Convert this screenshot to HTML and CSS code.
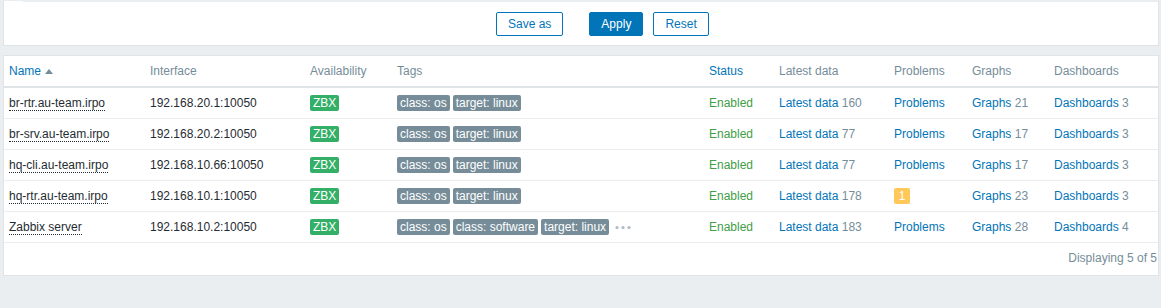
FILE: index.html
```html
<!DOCTYPE html>
<html lang="en">
<head>
<meta charset="utf-8">
<title>Hosts</title>
<link rel="stylesheet" href="styles.css">
</head>
<body>
<div class="page">
  <div class="filter">
    <div class="filter-rule"></div>
    <div class="filter-actions">
      <button class="btn btn-alt btn-save">Save as</button>
      <button class="btn btn-main">Apply</button>
      <button class="btn btn-alt">Reset</button>
    </div>
  </div>
  <div class="list">
    <table class="hosts">
      <colgroup>
        <col class="c-name"><col class="c-iface"><col class="c-avail"><col class="c-tags"><col class="c-status"><col class="c-latest"><col class="c-problems"><col class="c-graphs"><col class="c-dash">
      </colgroup>
      <thead>
        <tr>
          <th><a class="sort">Name</a><span class="arrow-up"></span></th>
          <th>Interface</th>
          <th>Availability</th>
          <th>Tags</th>
          <th><a class="sort">Status</a></th>
          <th>Latest data</th>
          <th>Problems</th>
          <th>Graphs</th>
          <th>Dashboards</th>
        </tr>
      </thead>
      <tbody>
        <tr>
          <td><a class="action">br-rtr.au-team.irpo</a></td>
          <td>192.168.20.1:10050</td>
          <td><span class="avail">ZBX</span></td>
          <td><span class="tag">class: os</span><span class="tag">target: linux</span></td>
          <td class="enabled">Enabled</td>
          <td><a class="link">Latest data</a> <span class="count">160</span></td>
          <td><a class="link">Problems</a></td>
          <td><a class="link">Graphs</a> <span class="count">21</span></td>
          <td><a class="link">Dashboards</a> <span class="count">3</span></td>
        </tr>
        <tr>
          <td><a class="action">br-srv.au-team.irpo</a></td>
          <td>192.168.20.2:10050</td>
          <td><span class="avail">ZBX</span></td>
          <td><span class="tag">class: os</span><span class="tag">target: linux</span></td>
          <td class="enabled">Enabled</td>
          <td><a class="link">Latest data</a> <span class="count">77</span></td>
          <td><a class="link">Problems</a></td>
          <td><a class="link">Graphs</a> <span class="count">17</span></td>
          <td><a class="link">Dashboards</a> <span class="count">3</span></td>
        </tr>
        <tr>
          <td><a class="action">hq-cli.au-team.irpo</a></td>
          <td>192.168.10.66:10050</td>
          <td><span class="avail">ZBX</span></td>
          <td><span class="tag">class: os</span><span class="tag">target: linux</span></td>
          <td class="enabled">Enabled</td>
          <td><a class="link">Latest data</a> <span class="count">77</span></td>
          <td><a class="link">Problems</a></td>
          <td><a class="link">Graphs</a> <span class="count">17</span></td>
          <td><a class="link">Dashboards</a> <span class="count">3</span></td>
        </tr>
        <tr>
          <td><a class="action">hq-rtr.au-team.irpo</a></td>
          <td>192.168.10.1:10050</td>
          <td><span class="avail">ZBX</span></td>
          <td><span class="tag">class: os</span><span class="tag">target: linux</span></td>
          <td class="enabled">Enabled</td>
          <td><a class="link">Latest data</a> <span class="count">178</span></td>
          <td><span class="problem-badge">1</span></td>
          <td><a class="link">Graphs</a> <span class="count">23</span></td>
          <td><a class="link">Dashboards</a> <span class="count">3</span></td>
        </tr>
        <tr>
          <td><a class="action">Zabbix server</a></td>
          <td>192.168.10.2:10050</td>
          <td><span class="avail">ZBX</span></td>
          <td><span class="tag">class: os</span><span class="tag">class: software</span><span class="tag">target: linux</span><svg class="more" width="16" height="5" viewBox="0 0 16 5"><circle cx="2" cy="2.5" r="1.6"/><circle cx="8" cy="2.5" r="1.6"/><circle cx="14" cy="2.5" r="1.6"/></svg></td>
          <td class="enabled">Enabled</td>
          <td><a class="link">Latest data</a> <span class="count">183</span></td>
          <td><a class="link">Problems</a></td>
          <td><a class="link">Graphs</a> <span class="count">28</span></td>
          <td><a class="link">Dashboards</a> <span class="count">4</span></td>
        </tr>
      </tbody>
    </table>
    <div class="list-footer">Displaying 5 of 5</div>
  </div>
</div>
</body>
</html>
```
FILE: styles.css
```css
html, body {
  margin: 0;
  padding: 0;
  background: #ebeef0;
  font-family: "Liberation Sans", Arial, sans-serif;
  font-size: 12px;
  color: #1f2c33;
}

.page {
  padding: 0 2px 0 3px;
}

.filter {
  background: #ffffff;
  border: 1px solid #dfe4e7;
  border-top: none;
}

.filter-rule {
  margin: 1px 0 0 19px;
  border-top: 1px solid #ebeef0;
}

.filter-actions {
  display: flex;
  align-items: center;
  padding: 10px 0 9px 492px;
}

.btn {
  box-sizing: border-box;
  height: 24px;
  padding: 0 11px;
  border: 1px solid #0275b8;
  border-radius: 2px;
  font-family: "Liberation Sans", Arial, sans-serif;
  font-size: 12px;
  line-height: 22px;
  cursor: pointer;
}

.btn-alt {
  background: #ffffff;
  color: #0275b8;
}

.btn-main {
  background: #0275b8;
  color: #ffffff;
  margin-right: 10px;
}

.btn-save {
  margin-right: 26px;
}

.list {
  margin-top: 9px;
  background: #ffffff;
  border: 1px solid #dfe4e7;
}

.hosts {
  width: 100%;
  table-layout: fixed;
  border-collapse: separate;
  border-spacing: 0;
}

.c-name { width: 141px; }
.c-iface { width: 160px; }
.c-avail { width: 87px; }
.c-tags { width: 312px; }
.c-status { width: 70px; }
.c-latest { width: 115px; }
.c-problems { width: 78px; }
.c-graphs { width: 82px; }
.c-dash { width: 109px; }

.hosts th {
  height: 30px;
  padding: 0 5px;
  text-align: left;
  font-weight: normal;
  color: #768d99;
  border-bottom: 2px solid #dfe4e7;
  white-space: nowrap;
  vertical-align: middle;
}

.hosts td {
  height: 30px;
  padding: 0 5px;
  border-bottom: 1px solid #ebeef0;
  white-space: nowrap;
  vertical-align: middle;
}

.sort {
  color: #0275b8;
  text-decoration: none;
}

.arrow-up {
  display: inline-block;
  margin-left: 4px;
  width: 0;
  height: 0;
  border-left: 4px solid transparent;
  border-right: 4px solid transparent;
  border-bottom: 5px solid #768d99;
  vertical-align: 1px;
}

.action {
  color: #1f2c33;
  text-decoration: none;
  border-bottom: 1px dotted #1f2c33;
}

.link {
  color: #0275b8;
  text-decoration: none;
}

.count {
  color: #768d99;
}

.enabled {
  color: #429e47;
}

.avail {
  display: inline-block;
  padding: 0 3px;
  line-height: 16px;
  border-radius: 2px;
  background: #34af67;
  color: #ffffff;
}

.tag {
  display: inline-block;
  padding: 0 3px;
  margin-right: 3px;
  line-height: 16px;
  border-radius: 2px;
  background: #768d99;
  color: #ffffff;
}

.more {
  display: inline-block;
  margin-left: 3px;
  fill: #aebac2;
  vertical-align: middle;
}

.problem-badge {
  display: inline-block;
  width: 16px;
  line-height: 16px;
  text-align: center;
  border-radius: 2px;
  background: #ffc859;
  color: #ffffff;
}

.list-footer {
  height: 32px;
  line-height: 31px;
  text-align: right;
  padding-right: 1px;
  color: #768d99;
}
```
